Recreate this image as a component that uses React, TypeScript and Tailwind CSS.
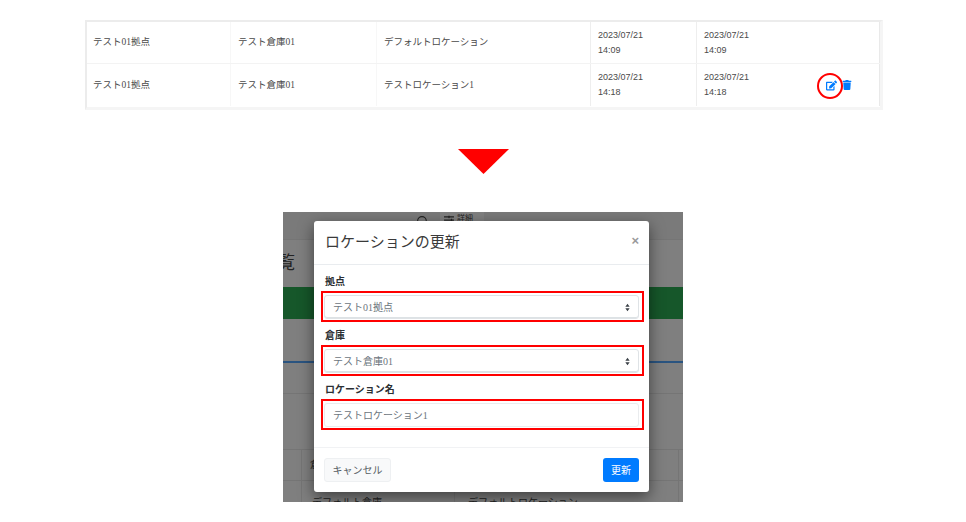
import React from "react";
import { Search } from "lucide-react";
import { FaEdit, FaTrash, FaSlidersH } from "react-icons/fa";

const jp = "font-['Liberation_Serif','Noto_Sans_CJK_JP',serif]";

const rows = [
  { base: "テスト01拠点", soko: "テスト倉庫01", loc: "デフォルトロケーション", made: "14:09", edit: false },
  { base: "テスト01拠点", soko: "テスト倉庫01", loc: "テストロケーション1", made: "14:18", edit: true },
];

const Chevrons = () => (
  <svg width="5" height="9" viewBox="0 0 6 10" className="fill-[#3c4248]">
    <path d="M3 0.5 5.6 4H0.4zM3 9.5 0.4 6h5.2z" />
  </svg>
);

const Field = ({ label, value, select }: { label: string; value: string; select?: boolean }) => (
  <div className="mb-1">
    <div className="ml-px h-[19px] text-[10px] font-bold leading-[19px] text-[#2b2f33]">{label}</div>
    <div className="-ml-[3px] -mr-[5px] h-[31px] border-2 border-[#ff0000] pb-[1px] pl-[1px] pr-[3px] pt-[2px]">
      <div
        className={`flex h-6 items-center justify-between rounded-[3px] border pl-2 pr-2 text-[10px] text-[#6c757d] ${
          select ? "border-[#dfe3e6] shadow-[inset_0_-1px_0_#dde2e5]" : "border-[#eaecee]"
        }`}
      >
        <span>{value}</span>
        {select && <Chevrons />}
      </div>
    </div>
  </div>
);

const UpdateModal = () => (
  <div className="absolute left-[31px] top-[9px] flex h-[271px] w-[335px] flex-col rounded-[3px] bg-white shadow-[0_5px_15px_rgba(0,0,0,0.5)]">
    <div className="flex h-[44px] items-center justify-between border-b border-[#e9ecef] pl-[11px] pr-[10px]">
      <span className="text-[15px] leading-none text-[#3a3a3a]">ロケーションの更新</span>
      <span className="-mt-1 font-['Liberation_Sans',sans-serif] text-[13px] font-bold leading-none text-[#9a9a9a]">×</span>
    </div>
    <div className="flex-1 px-[10px] pt-[7px]">
      <Field label="拠点" value="テスト01拠点" select />
      <Field label="倉庫" value="テスト倉庫01" select />
      <Field label="ロケーション名" value="テストロケーション1" />
    </div>
    <div className="flex h-[45px] items-center justify-between border-t border-[#f1f2f4] px-[10px]">
      <button className="h-6 w-[67px] rounded-[3px] border border-[#eef0f2] bg-[#f8f9fa] text-[10px] text-[#555c63]">キャンセル</button>
      <button className="h-6 w-9 rounded-[3px] bg-[#007bff] text-[10px] text-white">更新</button>
    </div>
  </div>
);

const Backdrop = () => (
  <div className="flex h-[290px] w-[400px] flex-col overflow-hidden bg-[#7f7f7f]">
    <div className="flex h-[28px] items-start border-b border-[#757575] bg-[#7a7a7a] pl-[133px]">
      <Search size={13} strokeWidth={2} className="mt-[3px] text-[#222]" />
      <div className="ml-[11px] flex h-[27px] w-[44px] items-start gap-[3px] bg-[#808080] pl-1 pt-[3px] text-[8px] leading-none text-[#222]">
        <FaSlidersH size={10} />
        詳細
      </div>
    </div>
    <div className="flex h-[47px] items-center pb-[2px] text-[18px] leading-none text-[#222]">
      <span className="-ml-[6px]">覧</span>
    </div>
    <div className="h-[32px] bg-[#16572a]" />
    <div className="h-[44px] border-b-2 border-[#2a5480]" />
    <div className="h-[31px] border-b border-[#757575]" />
    <div className="h-[56px] border-b border-[#757575]" />
    <div className="grid h-[31px] grid-cols-[19px_152px_1fr_5px] border-b border-[#757575]">
      <div className="border-r border-[#757575]" />
      <div className="pl-2 pt-[10px] text-[10px] leading-none text-[#222]">倉</div>
      <div />
      <div className="border-l border-[#757575]" />
    </div>
    <div className="grid min-h-0 flex-1 grid-cols-[19px_152px_1fr_5px] overflow-hidden">
      <div className="border-r border-[#757575]" />
      <div className="pl-[10px] pt-[17px] text-[10px] leading-none text-[#222]">デフォルト倉庫</div>
      <div className="border-l border-[#757575] pl-[13px] pt-[17px] text-[10px] leading-none text-[#222]">デフォルトロケーション</div>
      <div className="border-l border-[#757575]" />
    </div>
  </div>
);

const App = () => {
  return (
    <div className={`flex h-[522px] w-[966px] flex-col items-center bg-white text-[#4a4a4a] ${jp}`}>
      {/* 一覧テーブル */}
      <section className="ml-[85px] mt-5 h-[90px] w-[798px] self-start border-b-[3px] border-l-2 border-r-[3px] border-t-2 border-[#ececec] border-b-[#f5f5f5] border-r-[#f5f5f5]">
        {rows.map((r, i) => (
          <div
            key={i}
            className={`grid h-[42px] grid-cols-[144px_146px_214px_106px_1fr] text-[9.5px] ${i === 0 ? "border-b border-[#f3f3f3]" : ""}`}
          >
            <div className="flex items-center border-r border-[#f7f7f7] pl-[6px]">{r.base}</div>
            <div className="flex items-center border-r border-[#f7f7f7] pl-[7px]">{r.soko}</div>
            <div className="flex items-center border-r border-[#eeeeee] pl-[7px]">{r.loc}</div>
            <div className="flex flex-col justify-center border-r border-[#eeeeee] pl-[7px] font-['Liberation_Sans',sans-serif] text-[9px] leading-[15px]">
              <span>2023/07/21</span>
              <span>{r.made}</span>
            </div>
            <div className="flex flex-col justify-center border-r border-[#e9e9e9] pl-[7px] font-['Liberation_Sans',sans-serif] text-[9px] leading-[15px]">
              <div className="flex items-center justify-between">
                <div>
                  <div>2023/07/21</div>
                  <div>{r.made}</div>
                </div>
                {r.edit && (
                  <div className="relative mr-[27px] flex items-center gap-[5px] text-[#007bff]">
                    <FaEdit size={11} />
                    <FaTrash size={10} />
                    <div className="absolute -left-[9px] -top-[7px] size-[26px] rounded-full border-2 border-[#ff0000]" />
                  </div>
                )}
              </div>
            </div>
          </div>
        ))}
      </section>

      {/* 矢印 */}
      <svg width="51" height="25" viewBox="0 0 51 25" className="mt-[39px] fill-[#ff0000]">
        <polygon points="0,0 51,0 25.5,25" />
      </svg>

      {/* モーダル */}
      <section className="relative mt-[38px] overflow-hidden">
        <Backdrop />
        <UpdateModal />
      </section>
    </div>
  );
};

export default App;
